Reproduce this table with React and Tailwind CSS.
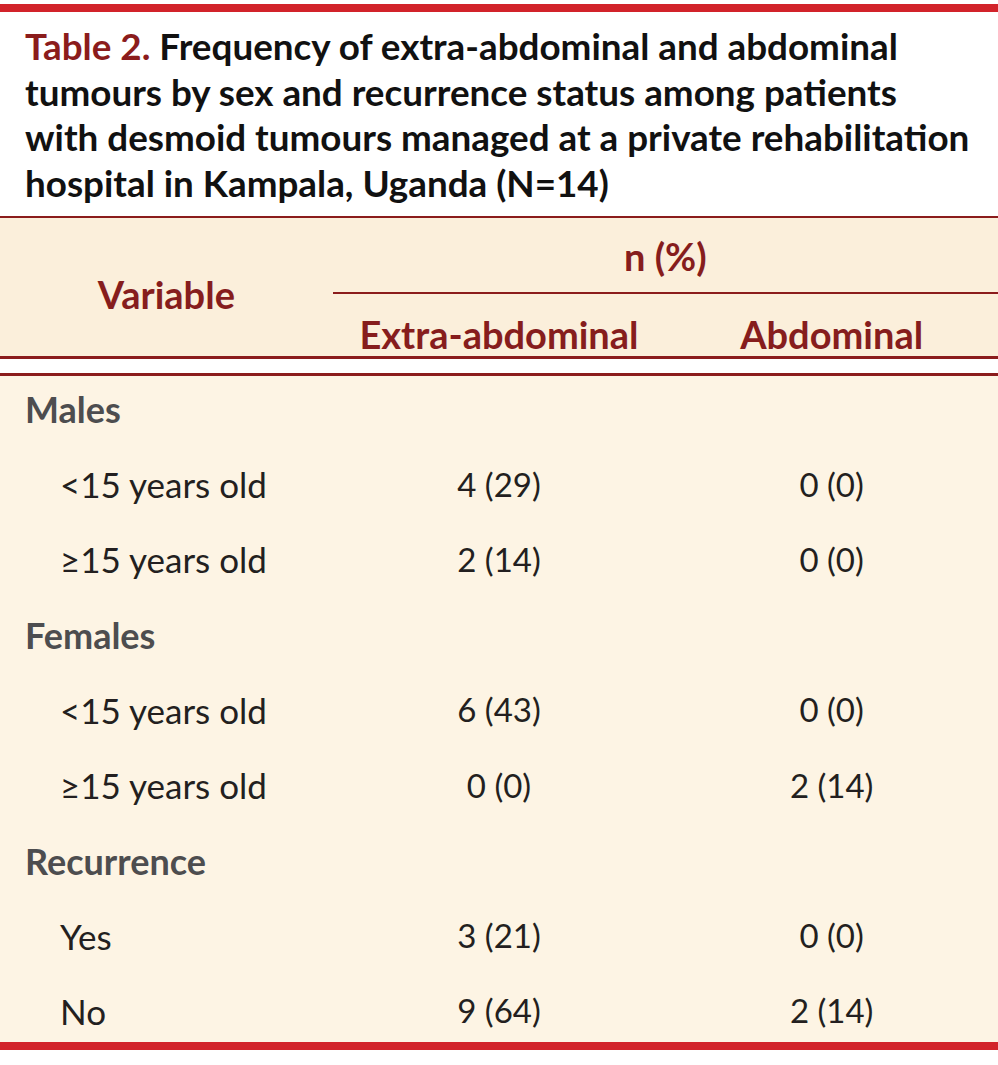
import React from "react";

const rows = [
  { label: "Males", group: true },
  { label: "<15 years old", extra: "4 (29)", abd: "0 (0)" },
  { label: "≥15 years old", extra: "2 (14)", abd: "0 (0)" },
  { label: "Females", group: true },
  { label: "<15 years old", extra: "6 (43)", abd: "0 (0)" },
  { label: "≥15 years old", extra: "0 (0)", abd: "2 (14)" },
  { label: "Recurrence", group: true },
  { label: "Yes", extra: "3 (21)", abd: "0 (0)" },
  { label: "No", extra: "9 (64)", abd: "2 (14)" },
];

const App = () => {
  return (
    <div className="w-[998px] bg-white pt-[4px] font-['Lato','Liberation_Sans',sans-serif]">
      {/* top rule */}
      <div className="h-[8px] bg-[#d2232a]" />

      {/* Caption */}
      <div className="px-[25px] pt-[12px] pb-[10px] text-[36.8px] leading-[45.5px] font-bold text-[#111]">
        <span className="text-[#8b1c1c]">Table 2.</span> Frequency of extra-abdominal and abdominal
        <br />
        tumours by sex and recurrence status among patients
        <br />
        with desmoid tumours managed at a private rehabilitation
        <br />
        hospital in Kampala, Uganda (N=14)
      </div>

      {/* Header */}
      <div className="grid grid-cols-3 border-t-2 border-b-[3px] border-[#8b1c1c] bg-[#fbefdb] text-[38px] font-bold text-[#861d1d]">
        <div className="flex items-center justify-center pt-[14px]">Variable</div>
        <div className="col-span-2 flex flex-col">
          <div className="flex h-[74px] items-center justify-center pt-[2px]">n (%)</div>
          <div className="grid h-[64px] grid-cols-2 border-t-2 border-[#8b1c1c] pt-[12px]">
            <div className="flex items-center justify-center">Extra-abdominal</div>
            <div className="flex items-center justify-center">Abdominal</div>
          </div>
        </div>
      </div>

      {/* Body */}
      <div className="mt-[14px] flex flex-col gap-[13.25px] border-t-[3px] border-b-[8px] border-t-[#8b1c1c] border-b-[#d2232a] bg-[#fdf4e4] pt-[2px] text-[35px] text-[#231f20]">
        {rows.map((r, i) =>
          r.group ? (
            <div key={i} className="flex h-[62px] items-center pl-[25px] text-[36px] font-bold text-[#4d4d4f]">
              {r.label}
            </div>
          ) : (
            <div key={i} className="grid h-[62px] grid-cols-3 items-center">
              <div className="pl-[60px]">{r.label}</div>
              <div className="text-center text-[33px]">{r.extra}</div>
              <div className="text-center text-[33px]">{r.abd}</div>
            </div>
          )
        )}
      </div>
    </div>
  );
};

export default App;
